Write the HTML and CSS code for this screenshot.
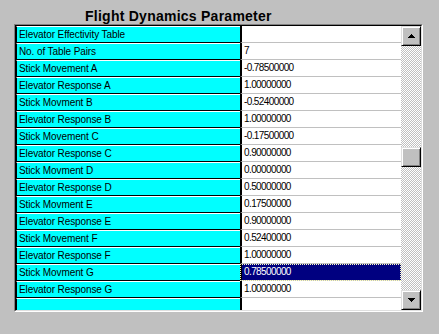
FILE: index.html
```html
<!DOCTYPE html>
<html>
<head>
<meta charset="utf-8">
<link rel="stylesheet" href="styles.css">
</head>
<body>
<div class="window">
  <h1 class="title">Flight Dynamics Parameter</h1>
  <div class="grid">
    <div class="grid-inner">
      <div class="rows">
        <div class="row"><div class="label">Elevator Effectivity Table</div><div class="value"></div></div>
        <div class="row"><div class="label">No. of Table Pairs</div><div class="value">7</div></div>
        <div class="row"><div class="label">Stick Movement A</div><div class="value">-0.78500000</div></div>
        <div class="row"><div class="label">Elevator Response A</div><div class="value">1.00000000</div></div>
        <div class="row"><div class="label">Stick Movment B</div><div class="value">-0.52400000</div></div>
        <div class="row"><div class="label">Elevator Response B</div><div class="value">1.00000000</div></div>
        <div class="row"><div class="label">Stick Movement C</div><div class="value">-0.17500000</div></div>
        <div class="row"><div class="label">Elevator Response C</div><div class="value">0.90000000</div></div>
        <div class="row"><div class="label">Stick Movment D</div><div class="value">0.00000000</div></div>
        <div class="row"><div class="label">Elevator Response D</div><div class="value">0.50000000</div></div>
        <div class="row"><div class="label">Stick Movment E</div><div class="value">0.17500000</div></div>
        <div class="row"><div class="label">Elevator Response E</div><div class="value">0.90000000</div></div>
        <div class="row"><div class="label">Stick Movement F</div><div class="value">0.52400000</div></div>
        <div class="row"><div class="label">Elevator Response F</div><div class="value">1.00000000</div></div>
        <div class="row"><div class="label">Stick Movment G</div><div class="value sel">0.78500000</div></div>
        <div class="row"><div class="label">Elevator Response G</div><div class="value">1.00000000</div></div>
        <div class="row"><div class="label"></div><div class="value"></div></div>
      </div>
      <div class="scrollbar">
        <div class="sb-btn">
          <svg width="7" height="4" viewBox="0 0 7 4" shape-rendering="crispEdges"><rect x="3" y="0" width="1" height="1"/><rect x="2" y="1" width="3" height="1"/><rect x="1" y="2" width="5" height="1"/><rect x="0" y="3" width="7" height="1"/></svg>
        </div>
        <div class="sb-track"><div class="sb-thumb"></div></div>
        <div class="sb-btn">
          <svg width="7" height="4" viewBox="0 0 7 4" shape-rendering="crispEdges"><rect x="0" y="0" width="7" height="1"/><rect x="1" y="1" width="5" height="1"/><rect x="2" y="2" width="3" height="1"/><rect x="3" y="3" width="1" height="1"/></svg>
        </div>
      </div>
    </div>
  </div>
</div>
</body>
</html>
```

FILE: styles.css
```css
html, body {
  margin: 0;
  padding: 0;
  background: #c0c0c0;
}
body {
  width: 439px;
  height: 334px;
  overflow: hidden;
  font-family: "Liberation Sans", Arial, sans-serif;
  color: #000;
}
.title {
  margin: 0;
  padding: 8px 0 0 85px;
  height: 16px;
  font-size: 14px;
  line-height: 16px;
  font-weight: bold;
  letter-spacing: 0.25px;
}
.grid {
  margin-left: 14px;
  width: 409px;
  box-sizing: border-box;
  border: 1px solid;
  border-color: #808080 #fff #fff #808080;
}
.grid-inner {
  display: flex;
  height: 286px;
  box-sizing: border-box;
  border: 1px solid;
  border-color: #000 #dfdfdf #dfdfdf #000;
}
.rows {
  flex: 1;
  overflow: hidden;
}
.row {
  display: flex;
  height: 17px;
}
.label {
  width: 224px;
  box-sizing: border-box;
  background: #00ffff;
  border-top: 1px solid #fff;
  border-bottom: 1px solid #000;
  border-left: 1px solid #000;
  padding-left: 2px;
  font-size: 10px;
  line-height: 15px;
  white-space: nowrap;
  letter-spacing: -0.1px;
}
.value {
  flex: 1;
  box-sizing: border-box;
  background: #fff;
  border-left: 2px solid #000;
  border-bottom: 1px solid #c0c0c0;
  padding: 0 0 1px 2px;
  font-size: 10px;
  line-height: 15px;
  letter-spacing: -0.6px;
  white-space: nowrap;
}
.value.sel {
  background: #000080;
  color: #fff;
  outline: 1px dotted #ffffc0;
  outline-offset: -1px;
}
.scrollbar {
  width: 20px;
  display: flex;
  flex-direction: column;
}
.sb-btn, .sb-thumb {
  height: 20px;
  box-sizing: border-box;
  background: #c0c0c0;
  border: 1px solid;
  border-color: #dfdfdf #000 #000 #dfdfdf;
  box-shadow: inset 1px 1px #fff, inset -1px -1px #808080;
}
.sb-btn {
  display: flex;
  align-items: center;
  justify-content: center;
}
.sb-btn svg {
  display: block;
  fill: #000;
}
.sb-track {
  flex: 1;
  background: repeating-conic-gradient(#fff 0 25%, #c0c0c0 0 50%) 0 0 / 2px 2px;
}
.sb-thumb {
  margin-top: 101px;
}
```
